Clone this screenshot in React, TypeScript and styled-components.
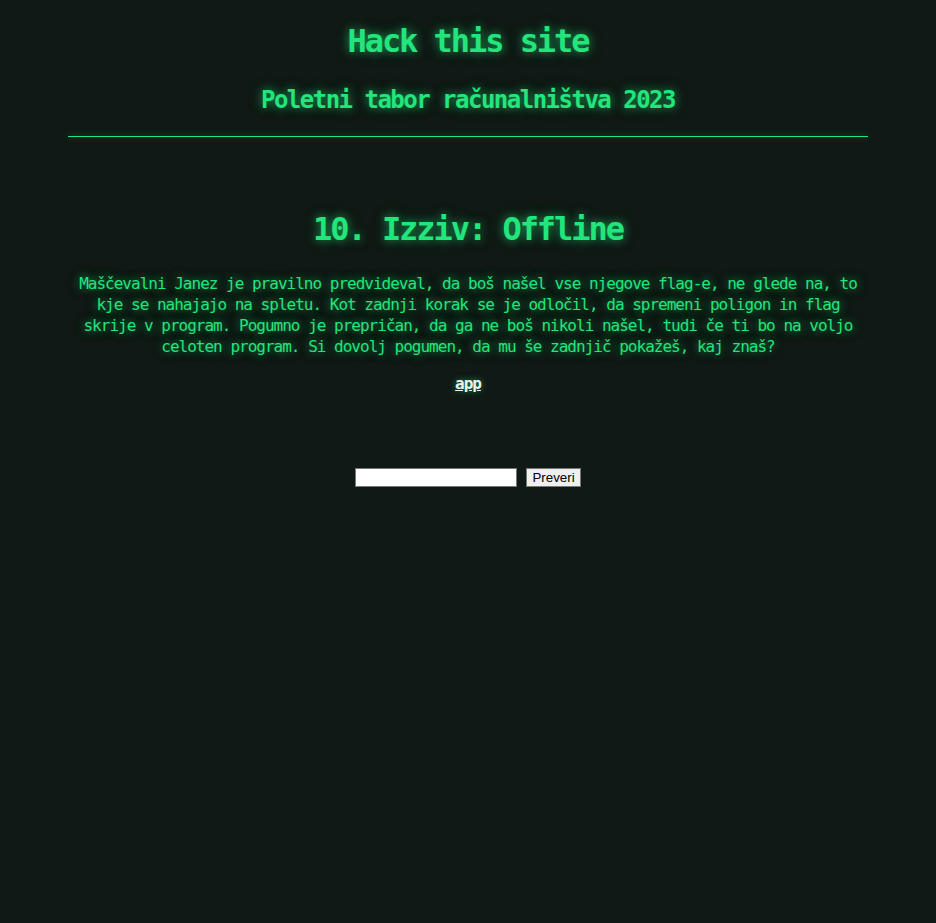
import React from "react";
import styled, { createGlobalStyle } from "styled-components";

const GREEN = "#22e57c";
const GLOW = "0 0 8px rgba(34, 229, 124, 0.55), 0 0 16px rgba(34, 229, 124, 0.25)";

const Global = createGlobalStyle`
  html, body {
    margin: 0;
    padding: 0;
    background: #101915;
    min-height: 100%;
  }
  body {
    font-family: "DejaVu Sans Mono", "Liberation Mono", monospace;
    color: ${GREEN};
  }
`;

const Page = styled.div`
  min-height: 923px;
  display: flex;
  flex-direction: column;
  align-items: center;
  padding-top: 23px;
  box-sizing: border-box;
`;

const Container = styled.div`
  width: 800px;
  display: flex;
  flex-direction: column;
  align-items: center;
`;

const SiteTitle = styled.h1`
  margin: 0;
  font-size: 32px;
  line-height: 37px;
  font-weight: bold;
  letter-spacing: -0.064em;
  text-shadow: ${GLOW};
`;

const SubTitle = styled.h2`
  margin: 26px 0 0;
  font-size: 24px;
  line-height: 28px;
  font-weight: bold;
  letter-spacing: -0.063em;
  text-shadow: ${GLOW};
`;

const Rule = styled.hr`
  width: 100%;
  margin: 22px 0 0;
  border: none;
  height: 1px;
  background: ${GREEN};
  box-shadow: 0 0 6px rgba(34, 229, 124, 0.5);
`;

const ChallengeTitle = styled.h2`
  margin: 74px 0 0;
  font-size: 32px;
  line-height: 37px;
  font-weight: bold;
  letter-spacing: -0.064em;
  text-shadow: ${GLOW};
`;

const Description = styled.p`
  margin: 25px 0 0;
  font-size: 16px;
  line-height: 21px;
  letter-spacing: -0.062em;
  text-align: center;
  text-shadow: ${GLOW};
`;

const LinkRow = styled.p`
  margin: 16px 0 0;
  font-size: 16px;
  line-height: 21px;
  letter-spacing: -0.062em;
`;

const FileLink = styled.a`
  color: #eeeeee;
  font-weight: bold;
  text-decoration: underline;
  text-shadow: 0 0 6px rgba(34, 229, 124, 0.6);
`;

const Form = styled.form`
  margin-top: 74px;
  display: flex;
  align-items: center;
  gap: 9px;
`;

const FlagInput = styled.input`
  box-sizing: border-box;
  width: 162px;
  height: 19px;
  margin: 0;
  padding: 1px 2px;
  background: #ffffff;
  border: 1px solid #767676;
  font-family: "Liberation Sans", Arial, sans-serif;
  font-size: 13.33px;
`;

const SubmitButton = styled.button`
  box-sizing: border-box;
  width: 55px;
  height: 19px;
  margin: 0;
  padding: 0 4px;
  background: #efefef;
  border: 1px solid #767676;
  color: #000;
  font-family: "Liberation Sans", Arial, sans-serif;
  font-size: 13.33px;
  line-height: 15px;
`;

export default function App() {
  return (
    <>
      <Global />
      <Page>
        <Container>
          <SiteTitle>Hack this site</SiteTitle>
          <SubTitle>Poletni tabor računalništva 2023</SubTitle>
          <Rule />
          <ChallengeTitle>10. Izziv: Offline</ChallengeTitle>
          <Description>
            Maščevalni Janez je pravilno predvideval, da boš našel vse njegove flag-e, ne glede na, to
            kje se nahajajo na spletu. Kot zadnji korak se je odločil, da spremeni poligon in flag
            skrije v program. Pogumno je prepričan, da ga ne boš nikoli našel, tudi če ti bo na voljo
            celoten program. Si dovolj pogumen, da mu še zadnjič pokažeš, kaj znaš?
          </Description>
          <LinkRow>
            <FileLink href="#">app</FileLink>
          </LinkRow>
          <Form onSubmit={(e) => e.preventDefault()}>
            <FlagInput type="text" />
            <SubmitButton type="submit">Preveri</SubmitButton>
          </Form>
        </Container>
      </Page>
    </>
  );
}
